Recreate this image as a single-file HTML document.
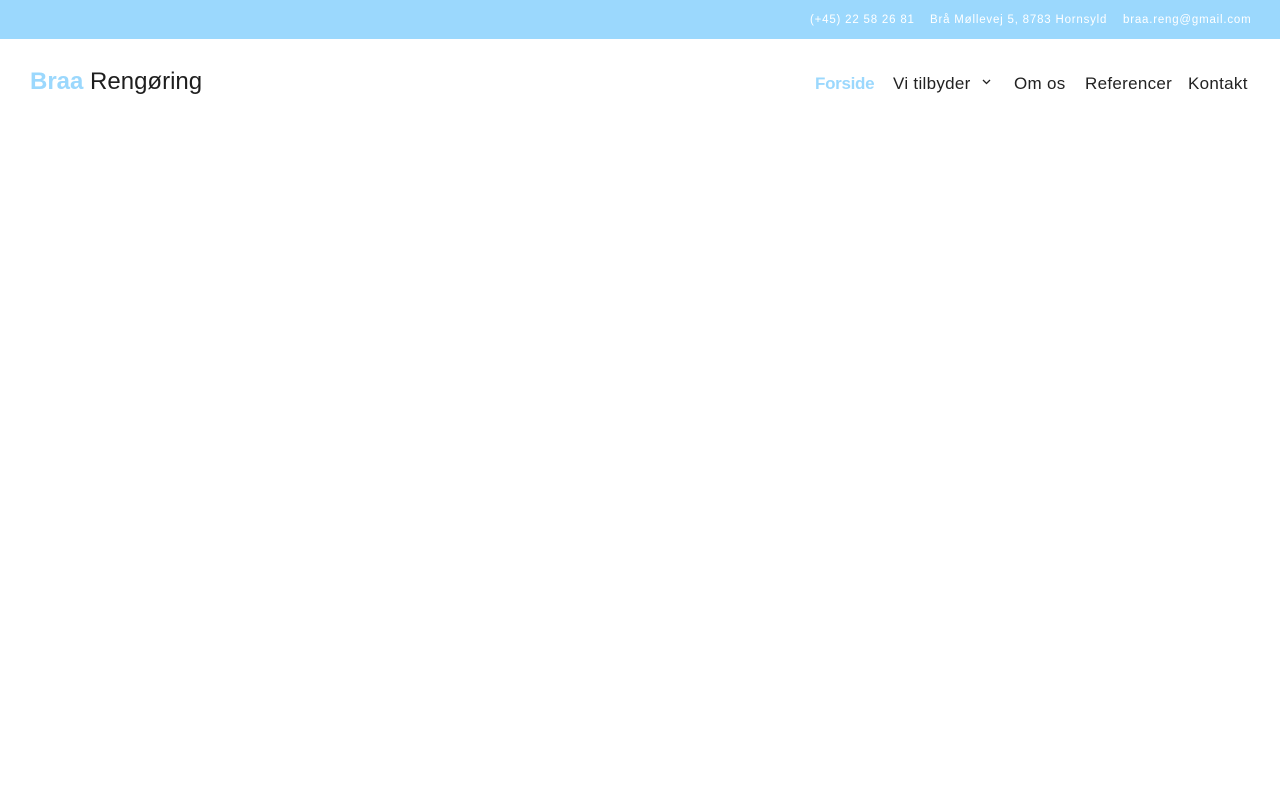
<!DOCTYPE html>
<html><head><meta charset="utf-8"><style>
*{margin:0;padding:0;box-sizing:border-box}
body{width:1280px;height:800px;background:#fff;font-family:"Liberation Sans",sans-serif;overflow:hidden}
.top{height:39px;background:#9bd8fd;color:#fff;font-size:11.5px;letter-spacing:.8px;position:relative}
.top span{position:absolute;top:14px;white-space:nowrap}
.logo{position:absolute;left:30px;top:68px;font-size:24px;color:#1e1e1e;white-space:nowrap}
.logo b{color:#9bd8fd;font-weight:bold}
.nav{position:absolute;top:74px;font-size:17px;color:#222;white-space:nowrap;letter-spacing:.3px}
</style></head><body>
<div class="top">
<span style="left:810px">(+45) 22 58 26 81</span>
<span style="left:930px">Brå Møllevej 5, 8783 Hornsyld</span>
<span style="left:1123px">braa.reng@gmail.com</span>
</div>
<div class="logo"><b>Braa</b> Rengøring</div>
<div class="nav" style="left:815px;color:#9bd8fd;font-weight:bold;letter-spacing:-.3px">Forside</div>
<div class="nav" style="left:893px">Vi tilbyder</div>
<svg style="position:absolute;left:982px;top:79px" width="9" height="6" viewBox="0 0 9 6"><path d="M1 1l3.5 3.5L8 1" stroke="#222" stroke-width="1.3" fill="none"/></svg>
<div class="nav" style="left:1014px">Om os</div>
<div class="nav" style="left:1085px">Referencer</div>
<div class="nav" style="left:1188px">Kontakt</div>
</body></html>
